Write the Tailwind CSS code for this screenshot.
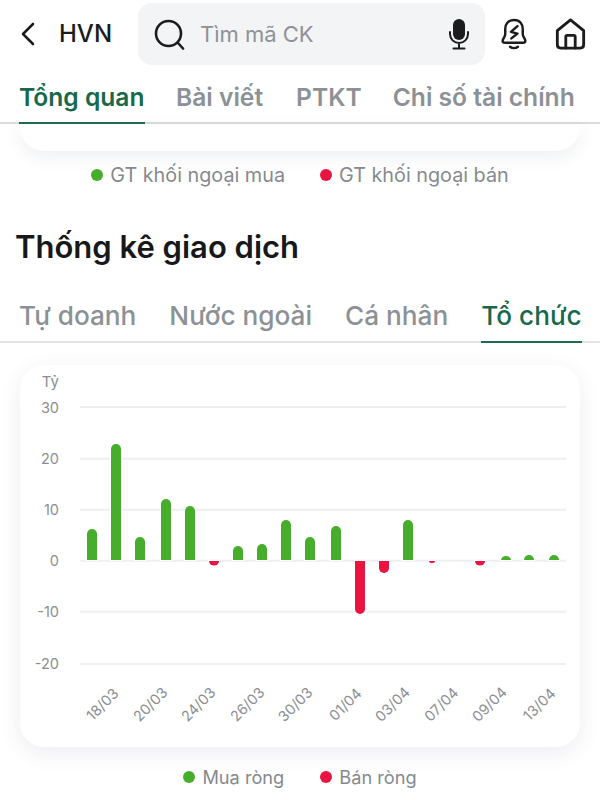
<!doctype html>
<html lang="vi">
<head>
<meta charset="utf-8">
<script src="https://cdn.jsdelivr.net/npm/@tailwindcss/browser@4"></script>
</head>
<body class="bg-white font-['Inter',sans-serif] w-[600px] h-[800px] overflow-hidden">
  <!-- top bar -->
  <header class="flex items-center h-[68px]">
    <svg class="ml-[20px] w-[18px] h-[24px] text-[#1c1c1e]" viewBox="0 0 18 24" fill="none" stroke="currentColor" stroke-width="2.6" stroke-linecap="round" stroke-linejoin="round"><path d="M13 2 L3 12 L13 22"/></svg>
    <span class="ml-[21px] w-[79px] text-[24px] font-medium text-[#1c1c1e]">HVN</span>
    <div class="flex items-center w-[347px] h-[62px] rounded-[14px] bg-[#f3f4f5]">
      <svg class="ml-[16px] w-[31px] h-[31px] text-[#1c1c1e]" viewBox="0 0 31 31" fill="none" stroke="currentColor" stroke-width="2.6" stroke-linecap="round"><circle cx="14.5" cy="14.5" r="12.5"/><path d="M24 24 L29 29.5"/></svg>
      <span class="ml-[15px] text-[22px] text-[#8e9297]">Tìm mã CK</span>
      <svg class="ml-auto mr-[15px] w-[22px] h-[32px] text-[#1c1c1e]" viewBox="0 0 22 32" fill="none" stroke="currentColor" stroke-width="2" stroke-linecap="round"><rect x="5" y="1" width="12" height="21" rx="6" fill="currentColor" stroke="none"/><path d="M2 14 V16 A9 9 0 0 0 20 16 V14 M11 25 V30 M5.5 30.5 H16.5"/></svg>
    </div>
    <svg class="ml-[15px] w-[28px] h-[32px] text-[#1c1c1e]" viewBox="0 0 32 36" fill="none" stroke="currentColor" stroke-width="2.8" stroke-linecap="round" stroke-linejoin="round"><path d="M16 2 C9 2 6 7 6 12 V18 C6 22 3 23 3 26 C3 27.5 4 28 6 28 H26 C28 28 29 27.5 29 26 C29 23 26 22 26 18 V12 C26 7 23 2 16 2 Z"/><path d="M11.5 32.5 C14 34.5 18 34.5 20.5 32.5"/><path d="M20 9 L12.5 15.5 L20 17.5 L13 23" stroke-width="2.8"/></svg>
    <svg class="ml-[27px] w-[31px] h-[32px] text-[#1c1c1e]" viewBox="0 0 32 34" fill="none" stroke="currentColor" stroke-width="3" stroke-linecap="round" stroke-linejoin="round"><path d="M2 13.5 L16 2 L30 13.5 V28 C30 30.5 29 32 26.5 32 H5.5 C3 32 2 30.5 2 28 Z"/><path d="M11 32 V20 C11 19 11.5 18.5 12.5 18.5 H19.5 C20.5 18.5 21 19 21 20 V32"/></svg>
  </header>

  <!-- main tabs -->
  <nav class="flex h-[56px] border-b-2 border-[#d9dadb] text-[24.6px] font-semibold text-[#8c9196]">
    <a class="ml-[19px] h-[56px] pt-[11px] w-[126px] border-b-2 border-[#1f6b4f] text-[#17694a] whitespace-nowrap">Tổng quan</a>
    <a class="ml-[31px] pt-[11px] whitespace-nowrap">Bài viết</a>
    <a class="ml-[33px] pt-[11px] whitespace-nowrap">PTKT</a>
    <a class="ml-[31px] pt-[11px] whitespace-nowrap">Chỉ số tài chính</a>
  </nav>

  <!-- bottom of the card above -->
  <div class="mx-[20px] h-[27px] rounded-b-[24px] bg-white shadow-[0_6px_18px_rgba(40,50,90,0.08)]"></div>
  <div class="flex justify-center gap-[35px] mt-[12px] h-[24px] text-[19.8px] leading-[24px] text-[#85898e]">
    <span class="flex items-center gap-[7px]"><i class="w-[12px] h-[12px] rounded-full bg-[#46ae2c]"></i>GT khối ngoại mua</span>
    <span class="flex items-center gap-[7px]"><i class="w-[12px] h-[12px] rounded-full bg-[#ea1440]"></i>GT khối ngoại bán</span>
  </div>

  <h2 class="ml-[15px] mt-[40px] h-[40px] text-[31px] leading-[40px] font-semibold text-[#17181a]">Thống kê giao dịch</h2>

  <!-- sub tabs -->
  <div class="flex mt-[29px] h-[47px] border-b-2 border-[#e3e4e5] text-[26.2px] font-medium text-[#8c9196]">
    <a class="ml-[19px] whitespace-nowrap">Tự doanh</a>
    <a class="ml-[33px] whitespace-nowrap">Nước ngoài</a>
    <a class="ml-[33px] whitespace-nowrap">Cá nhân</a>
    <a class="ml-[33px] w-[101px] h-[47px] border-b-2 border-[#1f6b4f] text-[#17694a] whitespace-nowrap">Tổ chức</a>
  </div>

  <!-- chart card -->
  <section class="mx-[20px] mt-[22px] h-[382px] rounded-[24px] bg-white shadow-[0_6px_22px_rgba(40,50,90,0.09)]">
    <svg class="w-[560px] h-[382px] font-['Inter',sans-serif]" viewBox="20 365 560 382">
      <g stroke="#eeeff0" stroke-width="2">
        <path d="M80 407 H566"/><path d="M80 458.7 H566"/><path d="M80 509.7 H566"/><path d="M80 560.7 H566"/><path d="M80 611.7 H566"/><path d="M80 664 H566"/>
      </g>
      <g fill="#8b8e93" font-size="14.5" text-anchor="end">
        <text x="59" y="387" font-size="15">Tỷ</text>
        <text x="59" y="413">30</text><text x="59" y="464">20</text><text x="59" y="515">10</text><text x="59" y="566">0</text><text x="59" y="617">-10</text><text x="59" y="669">-20</text>
      </g>
      <g fill="#46ae2c" stroke="#ffffff" stroke-width="2" paint-order="stroke">
        <path d="M87 560 V534 a5 5 0 0 1 10 0 V560 Z"/>
        <path d="M111 560 V449 a5 5 0 0 1 10 0 V560 Z"/>
        <path d="M135 560 V542 a5 5 0 0 1 10 0 V560 Z"/>
        <path d="M161 560 V504 a5 5 0 0 1 10 0 V560 Z"/>
        <path d="M185 560 V511 a5 5 0 0 1 10 0 V560 Z"/>
        <path d="M233 560 V551 a5 5 0 0 1 10 0 V560 Z"/>
        <path d="M257 560 V549 a5 5 0 0 1 10 0 V560 Z"/>
        <path d="M281 560 V525 a5 5 0 0 1 10 0 V560 Z"/>
        <path d="M305 560 V542 a5 5 0 0 1 10 0 V560 Z"/>
        <path d="M331 560 V531 a5 5 0 0 1 10 0 V560 Z"/>
        <path d="M403 560 V525 a5 5 0 0 1 10 0 V560 Z"/>
        <path d="M501 560 a5 4 0 0 1 10 0 Z"/>
        <path d="M524 560 a5 5 0 0 1 10 0 Z"/>
        <path d="M549 560 a5 5 0 0 1 10 0 Z"/>
      </g>
      <g fill="#ea1440" stroke="#ffffff" stroke-width="2" paint-order="stroke">
        <path d="M209 561 a5 4.5 0 0 0 10 0 Z"/>
        <path d="M355 561 V609 a5 5 0 0 0 10 0 V561 Z"/>
        <path d="M379 561 V568 a5 5 0 0 0 10 0 V561 Z"/>
        <path d="M429 561 a3 2 0 0 0 6 0 Z"/>
        <path d="M475 561 a5 4.5 0 0 0 10 0 Z"/>
      </g>
      <g fill="#8b8e93" font-size="14.5" text-anchor="middle">
        <text transform="translate(106 708) rotate(-45)">18/03</text>
        <text transform="translate(154 708) rotate(-45)">20/03</text>
        <text transform="translate(202 708) rotate(-45)">24/03</text>
        <text transform="translate(251 708) rotate(-45)">26/03</text>
        <text transform="translate(299 708) rotate(-45)">30/03</text>
        <text transform="translate(349 708) rotate(-45)">01/04</text>
        <text transform="translate(396 708) rotate(-45)">03/04</text>
        <text transform="translate(445 708) rotate(-45)">07/04</text>
        <text transform="translate(493 708) rotate(-45)">09/04</text>
        <text transform="translate(543 708) rotate(-45)">13/04</text>
      </g>
    </svg>
  </section>

  <div class="flex justify-center gap-[36px] mt-[18px] h-[24px] text-[18.2px] leading-[24px] text-[#85898e]">
    <span class="flex items-center gap-[7px]"><i class="w-[12px] h-[12px] rounded-full bg-[#46ae2c]"></i>Mua ròng</span>
    <span class="flex items-center gap-[7px]"><i class="w-[12px] h-[12px] rounded-full bg-[#ea1440]"></i>Bán ròng</span>
  </div>
</body>
</html>
